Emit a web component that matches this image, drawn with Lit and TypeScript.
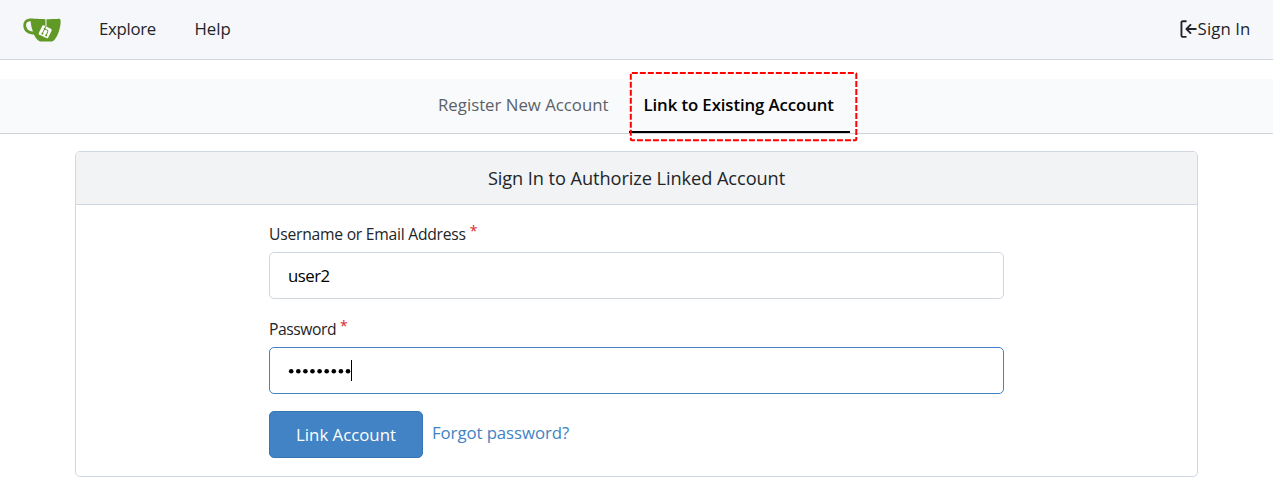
import { LitElement, html, css } from "lit";
import { customElement } from "lit/decorators.js";

@customElement("app-root")
export class AppRoot extends LitElement {
  static styles = css`
    :host {
      display: block;
      height: 491px;
      overflow: hidden;
      background: #fff;
      color: #212529;
      font: 16.8px/24px "Open Sans", "Noto Sans", sans-serif;
    }
    * { box-sizing: border-box; }
    a { color: inherit; text-decoration: none; }
    .nav {
      display: flex;
      align-items: center;
      height: 60px;
      padding: 0 22.5px 2px 22.5px;
      background: #f6f7fa;
      border-bottom: 1px solid #d0d7de;
    }
    .logo { width: 38px; height: 38px; flex: none; }
    .explore { margin-left: 38.5px; width: 57px; letter-spacing: -0.3px; white-space: nowrap; }
    .help { margin-left: 38.5px; letter-spacing: 0; }
    .signin { margin-left: auto; display: flex; align-items: center; letter-spacing: 0.1px; }
    .signin svg { width: 20px; height: 20px; }
    .tabs {
      display: flex;
      justify-content: center;
      height: 55px;
      margin-top: 19px;
      background: #f9fafc;
      border-bottom: 1px solid #d0d4d8;
    }
    .tab { padding: 14px 15px 0; height: 54px; color: #5b6167; white-space: nowrap; }
    .register { width: 205px; padding-left: 14.5px; }
    .current {
      position: relative;
      width: 221px;
      color: #000;
      font-weight: 600;
      letter-spacing: -0.1px;
      border-bottom: 2px solid #000;
    }
    .marker { position: absolute; left: 0; top: -8px; width: 230px; height: 72px; }
    .panel {
      width: 1123px;
      height: 326px;
      margin: 17px 0 0 75px;
      border: 1px solid #d0d7de;
      border-radius: 5px;
      overflow: hidden;
    }
    .title {
      height: 53px;
      margin: 0;
      padding-top: 14px;
      background: #f1f3f5;
      border-bottom: 1px solid #d0d7de;
      font-size: 18.2px;
      font-weight: 400;
      letter-spacing: -0.07px;
      text-align: center;
    }
    .form { width: 735px; margin: 0 0 0 193px; padding-top: 17px; }
    .label { display: flex; height: 30px; font-size: 15.7px; letter-spacing: -0.25px; }
    .short { letter-spacing: -0.45px; }
    .star { color: #db2828; margin: -3px 0 0 4px; font-size: 14px; }
    .field {
      display: flex;
      align-items: center;
      height: 47px;
      margin-bottom: 18px;
      padding: 0 18px;
      border: 1px solid #d0d7de;
      border-radius: 5px;
      color: #000;
      letter-spacing: -0.5px;
    }
    .focus { border-color: #4183c4; margin-bottom: 17px; }
    .dots { width: 63px; height: 8px; fill: #000; }
    .caret { width: 1px; height: 21px; background: #000; }
    .actions { display: flex; }
    .button {
      width: 154px;
      height: 47px;
      padding: 0;
      border: 1px solid #3876b3;
      border-radius: 5px;
      background: #4183c4;
      color: #fff;
      font: inherit;
    }
    .forgot { margin: 10px 0 0 9px; color: #4183c4; letter-spacing: -0.07px; }
  `;

  render() {
    return html`
      <nav class="nav">
        <svg class="logo" viewBox="0 0 640 640">
          <path fill="#fff" d="m395.9 484.2-126.9-61c-12.5-6-17.9-21.2-11.8-33.8l61-126.9c6-12.5 21.2-17.9 33.8-11.8 17.2 8.3 27.1 13 27.1 13l-.1-109.2 16.7-.1.1 117.1s57.4 24.2 83.1 40.1c3.7 2.3 10.2 6.8 12.9 14.4 2.1 6.1 2 13.1-1 19.3l-61 126.9c-6.2 12.7-21.4 18.1-33.9 12z"/>
          <path fill="#609926" d="M622.7 149.8c-4.1-4.1-9.6-4-9.6-4s-117.2 6.6-177.9 8c-13.3.3-26.5.6-39.6.7v117.2c-5.5-2.6-11.1-5.3-16.6-7.9 0-36.4-.1-109.2-.1-109.2-29 .4-89.2-2.2-89.2-2.2s-141.4-7.1-156.8-8.5c-9.8-.6-22.5-2.1-39 1.5-8.7 1.8-33.5 7.4-53.8 26.9C-4.9 212.4 6.6 276.2 8 285.8c1.7 11.7 6.9 44.2 31.7 72.5 45.8 56.1 144.4 54.8 144.4 54.8s12.1 28.9 30.6 55.5c25 33.1 50.7 58.9 75.7 62 63 0 188.9-.1 188.9-.1s12 .1 28.3-10.3c14-8.5 26.5-23.4 26.5-23.4S547 483 565 451.5c5.5-9.7 10.1-19.1 14.1-28 0 0 55.2-117.1 55.2-231.1-1.1-34.5-9.6-40.6-11.6-42.6zM125.6 353.9c-25.9-8.5-36.9-18.7-36.9-18.7S69.6 321.8 60 295.4c-16.5-44.2-1.4-71.2-1.4-71.2s8.4-22.5 38.5-30c13.8-3.7 31-3.1 31-3.1s7.1 59.4 15.7 94.2c7.2 29.2 24.8 77.7 24.8 77.7s-26.1-3.1-43-9.1zm300.3 107.6s-6.1 14.5-19.6 15.4c-5.8.4-10.3-1.2-10.3-1.2s-.3-.1-5.3-2.1l-112.9-55s-10.9-5.7-12.8-15.6c-2.2-8.1 2.7-18.1 2.7-18.1L322 273s4.8-9.7 12.2-13c.6-.3 2.3-1 4.5-1.5 8.1-2.1 18 2.8 18 2.8L467.4 315s12.6 5.7 15.3 16.2c1.9 7.4-.5 14-1.8 17.2-6.3 15.4-55 113.1-55 113.1z"/>
          <path fill="#609926" d="M326.8 380.1c-8.2.1-15.4 5.8-17.3 13.8s2 16.3 9.1 20c7.7 4 17.5 1.8 22.7-5.4 5.1-7.1 4.3-16.9-1.8-23.1l24-49.1c1.5.1 3.7.2 6.2-.5 4.1-.9 7.1-3.6 7.1-3.6 4.2 1.8 8.6 3.8 13.2 6.1 4.8 2.4 9.3 4.9 13.4 7.3.9.5 1.8 1.1 2.8 1.9 1.6 1.3 3.4 3.1 4.7 5.5 1.9 5.5-1.9 14.9-1.9 14.9-2.3 7.6-18.4 40.6-18.4 40.6-8.1-.2-15.3 5-17.7 12.5-2.6 8.1 1.1 17.3 8.9 21.3s17.4 1.7 22.5-5.3c5-6.8 4.6-16.3-1.1-22.6 1.9-3.7 3.7-7.4 5.6-11.3 5-10.4 13.5-30.4 13.5-30.4.9-1.7 5.7-10.3 2.7-21.3-2.5-11.4-12.6-16.7-12.6-16.7-12.2-7.9-29.2-15.2-29.2-15.2s0-4.1-1.1-7.1c-1.1-3.1-2.8-5.1-3.9-6.3 4.7-9.7 9.4-19.3 14.1-29-4.1-2-8.1-4-12.2-6.1-4.8 9.8-9.7 19.7-14.5 29.5-6.7-.1-12.9 3.5-16.1 9.4-3.4 6.3-2.7 14.1 1.9 19.8z"/>
        </svg>
        <a class="explore">Explore</a>
        <a class="help">Help</a>
        <a class="signin">
          <svg viewBox="0 0 16 16" fill="currentColor"><path d="M2 2.75C2 1.784 2.784 1 3.75 1h2.5a.75.75 0 0 1 0 1.5h-2.5a.25.25 0 0 0-.25.25v10.5c0 .138.112.25.25.25h2.5a.75.75 0 0 1 0 1.5h-2.5A1.75 1.75 0 0 1 2 13.25Zm6.56 4.5h5.69a.75.75 0 0 1 0 1.5H8.56l1.97 1.97a.749.749 0 0 1-.326 1.275.749.749 0 0 1-.734-.215L6.22 8.53a.75.75 0 0 1 0-1.06l3.25-3.25a.749.749 0 0 1 1.275.326.749.749 0 0 1-.215.734Z"/></svg>
          <span>Sign In</span>
        </a>
      </nav>
      <div class="tabs">
        <a class="tab register">Register New Account</a>
        <a class="tab current">Link to Existing Account
          <svg class="marker" viewBox="0 0 230 72" fill="none">
            <rect x="1.8" y="2" width="225.5" height="67.3" rx="1" stroke="#f00" stroke-width="2" stroke-dasharray="6 2"/>
          </svg>
        </a>
      </div>
      <section class="panel">
        <h4 class="title">Sign In to Authorize Linked Account</h4>
        <div class="form">
          <div class="label">Username or Email Address<span class="star">*</span></div>
          <div class="field">user2</div>
          <div class="label short">Password<span class="star">*</span></div>
          <div class="field focus">
            <svg class="dots" viewBox="0 0 63 8">
              ${Array.from({ length: 9 }, (_, i) => i).map(
                (i) => html`<svg x=${i * 7.1} width="7" height="8"><circle cx="3.2" cy="4.2" r="2.3"/></svg>`
              )}
            </svg>
            <span class="caret"></span>
          </div>
          <div class="actions">
            <button class="button">Link Account</button>
            <a class="forgot">Forgot password?</a>
          </div>
        </div>
      </section>
    `;
  }
}
